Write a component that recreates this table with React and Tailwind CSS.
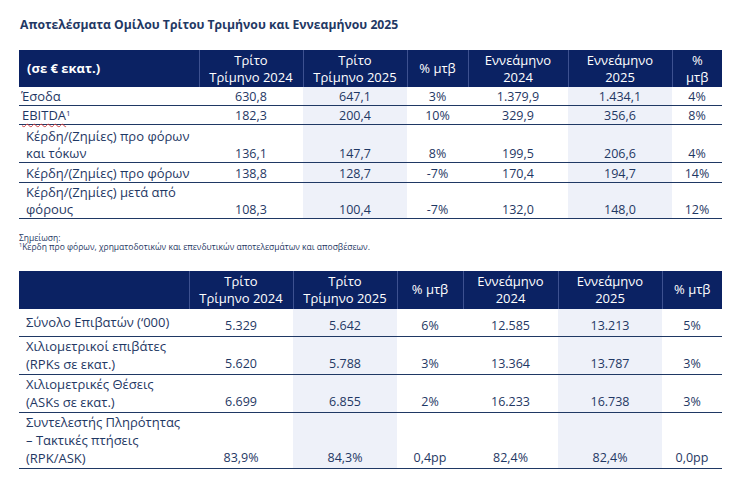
import React from "react";

const NAVY = "bg-[#0b2263]";
const txt = "text-[#1f3864]";

function HeadCell({ children, cls = "" }) {
  return (
    <th className={`border-l border-[#3d5190] text-center font-medium text-white text-[13px] leading-[17px] align-middle ${cls}`}>
      {children}
    </th>
  );
}

function T1Row({ label, vals, h, labelCls = "pl-[7px]" }) {
  return (
    <tr className={`${h}`}>
      <td className={`border-b border-[#1f3864] align-bottom text-[13px] leading-[17px] ${labelCls}`}>{label}</td>
      {vals.map((v, i) => (
        <td
          key={i}
          className={`border-b border-[#1f3864] text-center align-bottom leading-[17px] ${i === 1 || i === 4 ? "bg-[#eef1f9]" : ""}`}
        >
          {v}
        </td>
      ))}
    </tr>
  );
}

function T2Row({ label, vals, h, labelAlign = "align-bottom" }) {
  return (
    <tr className={`${h}`}>
      <td className={`border-b border-[#1f3864] pl-[7px] ${labelAlign} text-[13px] leading-[18px] pb-[1px]`}>{label}</td>
      {vals.map((v, i) => (
        <td
          key={i}
          className={`border-b border-[#1f3864] text-center align-bottom leading-[18px] pb-[1px] ${i === 1 || i === 4 ? "bg-[#eef1f9]" : ""}`}
        >
          {v}
        </td>
      ))}
    </tr>
  );
}

export default function App() {
  return (
    <div className={`w-[741px] h-[487px] bg-white ${txt} font-['Open_Sans',_'Noto_Sans',_sans-serif] text-[12.5px]`}>
      <div className="pt-[16px] pl-[20px] text-[12.2px] font-bold leading-[18px] text-[#1f3864]">
        Αποτελέσματα Ομίλου Τρίτου Τριμήνου και Εννεαμήνου 2025
      </div>

      <table className="mt-[16px] ml-[19px] w-[703px] table-fixed border-collapse">
        <colgroup>
          <col className="w-[180px]" />
          <col className="w-[104px]" />
          <col className="w-[104px]" />
          <col className="w-[61px]" />
          <col className="w-[100px]" />
          <col className="w-[104px]" />
          <col className="w-[50px]" />
        </colgroup>
        <thead>
          <tr className={`${NAVY} h-[37px]`}>
            <th className="pl-[8px] text-left font-bold text-[13px] text-white align-middle">(σε € εκατ.)</th>
            <HeadCell>Τρίτο<br />Τρίμηνο 2024</HeadCell>
            <HeadCell>Τρίτο<br />Τρίμηνο 2025</HeadCell>
            <HeadCell>% μτβ</HeadCell>
            <HeadCell>Εννεάμηνο<br />2024</HeadCell>
            <HeadCell>Εννεάμηνο<br />2025</HeadCell>
            <HeadCell>%<br />μτβ</HeadCell>
          </tr>
        </thead>
        <tbody>
          <T1Row h="h-[18px]" labelCls="pl-[2px]" label="Έσοδα" vals={["630,8", "647,1", "3%", "1.379,9", "1.434,1", "4%"]} />
          <T1Row
            h="h-[19px]"
            labelCls="pl-[3px]"
            label={
              <span>
                <span className="underline decoration-wavy decoration-[#d04040] decoration-[1px] underline-offset-[3px]">EBITDA</span>
                <sup className="text-[8px]">1</sup>
              </span>
            }
            vals={["182,3", "200,4", "10%", "329,9", "356,6", "8%"]}
          />
          <T1Row
            h="h-[38px]"
            label={<>Κέρδη/(Ζημίες) προ φόρων<br />και τόκων</>}
            vals={["136,1", "147,7", "8%", "199,5", "206,6", "4%"]}
          />
          <T1Row h="h-[20px]" label="Κέρδη/(Ζημίες) προ φόρων" vals={["138,8", "128,7", "-7%", "170,4", "194,7", "14%"]} />
          <T1Row
            h="h-[36px]"
            label={<>Κέρδη/(Ζημίες) μετά από<br />φόρους</>}
            vals={["108,3", "100,4", "-7%", "132,0", "148,0", "12%"]}
          />
        </tbody>
      </table>

      <div className="mt-[14px] ml-[19px] text-[8.5px] leading-[9.5px] text-[#1f3864]">
        <div>Σημείωση:</div>
        <div>
          <sup className="text-[5.5px]">1</sup>Κέρδη προ φόρων, χρηματοδοτικών και επενδυτικών αποτελεσμάτων και αποσβέσεων.
        </div>
      </div>

      <table className="mt-[19px] ml-[19px] w-[703px] table-fixed border-collapse">
        <colgroup>
          <col className="w-[170px]" />
          <col className="w-[104px]" />
          <col className="w-[104px]" />
          <col className="w-[66px]" />
          <col className="w-[95px]" />
          <col className="w-[104px]" />
          <col className="w-[60px]" />
        </colgroup>
        <thead>
          <tr className={`${NAVY} h-[38px]`}>
            <th></th>
            <HeadCell>Τρίτο<br />Τρίμηνο 2024</HeadCell>
            <HeadCell>Τρίτο<br />Τρίμηνο 2025</HeadCell>
            <HeadCell>% μτβ</HeadCell>
            <HeadCell>Εννεάμηνο<br />2024</HeadCell>
            <HeadCell>Εννεάμηνο<br />2025</HeadCell>
            <HeadCell>% μτβ</HeadCell>
          </tr>
        </thead>
        <tbody>
          <T2Row h="h-[28px]" labelAlign="align-middle" label="Σύνολο Επιβατών (‘000)" vals={["5.329", "5.642", "6%", "12.585", "13.213", "5%"]} />
          <T2Row h="h-[37px]" label={<>Χιλιομετρικοί επιβάτες<br />(RPKs σε εκατ.)</>} vals={["5.620", "5.788", "3%", "13.364", "13.787", "3%"]} />
          <T2Row h="h-[37px]" label={<>Χιλιομετρικές Θέσεις<br />(ASKs σε εκατ.)</>} vals={["6.699", "6.855", "2%", "16.233", "16.738", "3%"]} />
          <T2Row
            h="h-[54px]"
            label={<>Συντελεστής Πληρότητας<br />– Τακτικές πτήσεις<br />(RPK/ASK)</>}
            vals={["83,9%", "84,3%", "0,4pp", "82,4%", "82,4%", "0,0pp"]}
          />
        </tbody>
      </table>
    </div>
  );
}
